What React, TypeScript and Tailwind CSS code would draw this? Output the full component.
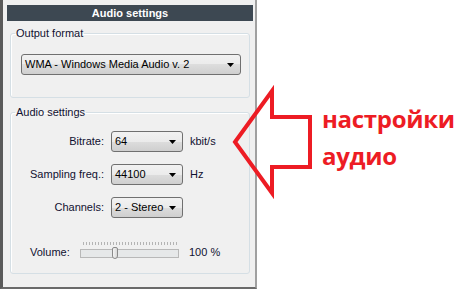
import React from 'react'

const ui = { fontFamily: '"Liberation Sans", Arial, sans-serif' }

function Combo({ value, className }: { value: string; className: string }) {
  return (
    <div
      className={`flex items-center justify-between rounded-[3px] border border-[#707070] bg-[linear-gradient(#f2f2f2,#ebebeb_50%,#dddddd_50%,#cfcfcf)] pl-[3px] pr-[6px] text-[11px] text-black ${className}`}
    >
      <span>{value}</span>
      <svg width="7" height="4" viewBox="0 0 7 4">
        <path d="M0 0H7L3.5 4Z" fill="#000" />
      </svg>
    </div>
  )
}

function Group({ title, className, children }: { title: string; className: string; children: React.ReactNode }) {
  return (
    <fieldset className={`rounded-[3px] border border-[#d5dfe5] shadow-[inset_1px_1px_0_#fff] ${className}`}>
      <legend className="ml-[4px] px-[1px] text-[11px] leading-[13px] text-[#101030]">{title}</legend>
      {children}
    </fieldset>
  )
}

function Ticks() {
  const xs: number[] = []
  for (let x = 0; x <= 93; x += 3) xs.push(x)
  return (
    <svg width="94" height="3" className="ml-[3px] block">
      {xs.map((x) => (
        <line key={x} x1={x + 0.5} y1="0" x2={x + 0.5} y2="3" stroke="#b4b4b4" strokeWidth="1" />
      ))}
    </svg>
  )
}

export default function App() {
  return (
    <div className="relative flex h-[289px] w-[476px] overflow-hidden bg-white" style={ui}>
      <div className="flex h-[289px] w-[257px] shrink-0 flex-col border-b-2 border-l-[3px] border-r-2 border-b-[#6a6a6a] border-l-[#5a5a5a] border-r-[#a0a0a0] bg-[#f0f0f0]">
        <div className="ml-[4px] mr-[2px] mt-[5px] flex h-[16px] items-center justify-center bg-[#3d4852] text-[11px] font-bold text-white">
          Audio settings
        </div>

        <Group title="Output format" className="ml-[7px] mt-[6px] h-[71px] w-[240px]">
          <Combo value="WMA - Windows Media Audio v. 2" className="ml-[10px] mt-[14px] h-[21px] w-[220px]" />
        </Group>

        <Group title="Audio settings" className="ml-[7px] mt-[8px] h-[168px] w-[240px]">
          <div className="mt-[12px] grid grid-cols-[93px_72px_auto] items-center gap-x-[7px] gap-y-[12px] text-[11px] text-[#101030]">
            <span className="text-right">Bitrate:</span>
            <Combo value="64" className="h-[21px]" />
            <span>kbit/s</span>
            <span className="text-right">Sampling freq.:</span>
            <Combo value="44100" className="h-[21px]" />
            <span>Hz</span>
            <span className="text-right">Channels:</span>
            <Combo value="2 - Stereo" className="h-[21px]" />
            <span />
          </div>

          <div className="mt-[24px] flex items-end text-[11px] text-[#101030]">
            <span className="ml-[19px] w-[50px] leading-[12px]">Volume:</span>
            <div className="flex w-[99px] flex-col">
              <Ticks />
              <div className="relative mt-[4px] h-[9px] border border-[#b8b8b8] bg-[#e6e8e9]">
                <div className="absolute left-[31px] top-[-3px] h-[12px] w-[6px] rounded-t-[2px] rounded-b-[3px] border border-[#8a8a8a] bg-[linear-gradient(90deg,#f4f4f4,#d8d8d8)]" />
              </div>
            </div>
            <span className="ml-[10px] leading-[12px]">100 %</span>
          </div>
        </Group>
      </div>

      <div
        className="ml-[65px] mt-[100px] flex flex-col text-[24px] font-bold leading-[37px] tracking-[-0.3px] text-[#ed1c24]"
        style={{ fontFamily: '"Open Sans", "Comic Sans MS", sans-serif' }}
      >
        <span>настройки</span>
        <span>аудио</span>
      </div>

      <svg className="absolute left-0 top-0" width="476" height="289" viewBox="0 0 476 289">
        <polygon
          points="235,142 272,91 272,117 310,117 310,167 272,167 272,193"
          fill="none"
          stroke="#ed1c24"
          strokeWidth="4"
          strokeLinejoin="miter"
        />
      </svg>
    </div>
  )
}
